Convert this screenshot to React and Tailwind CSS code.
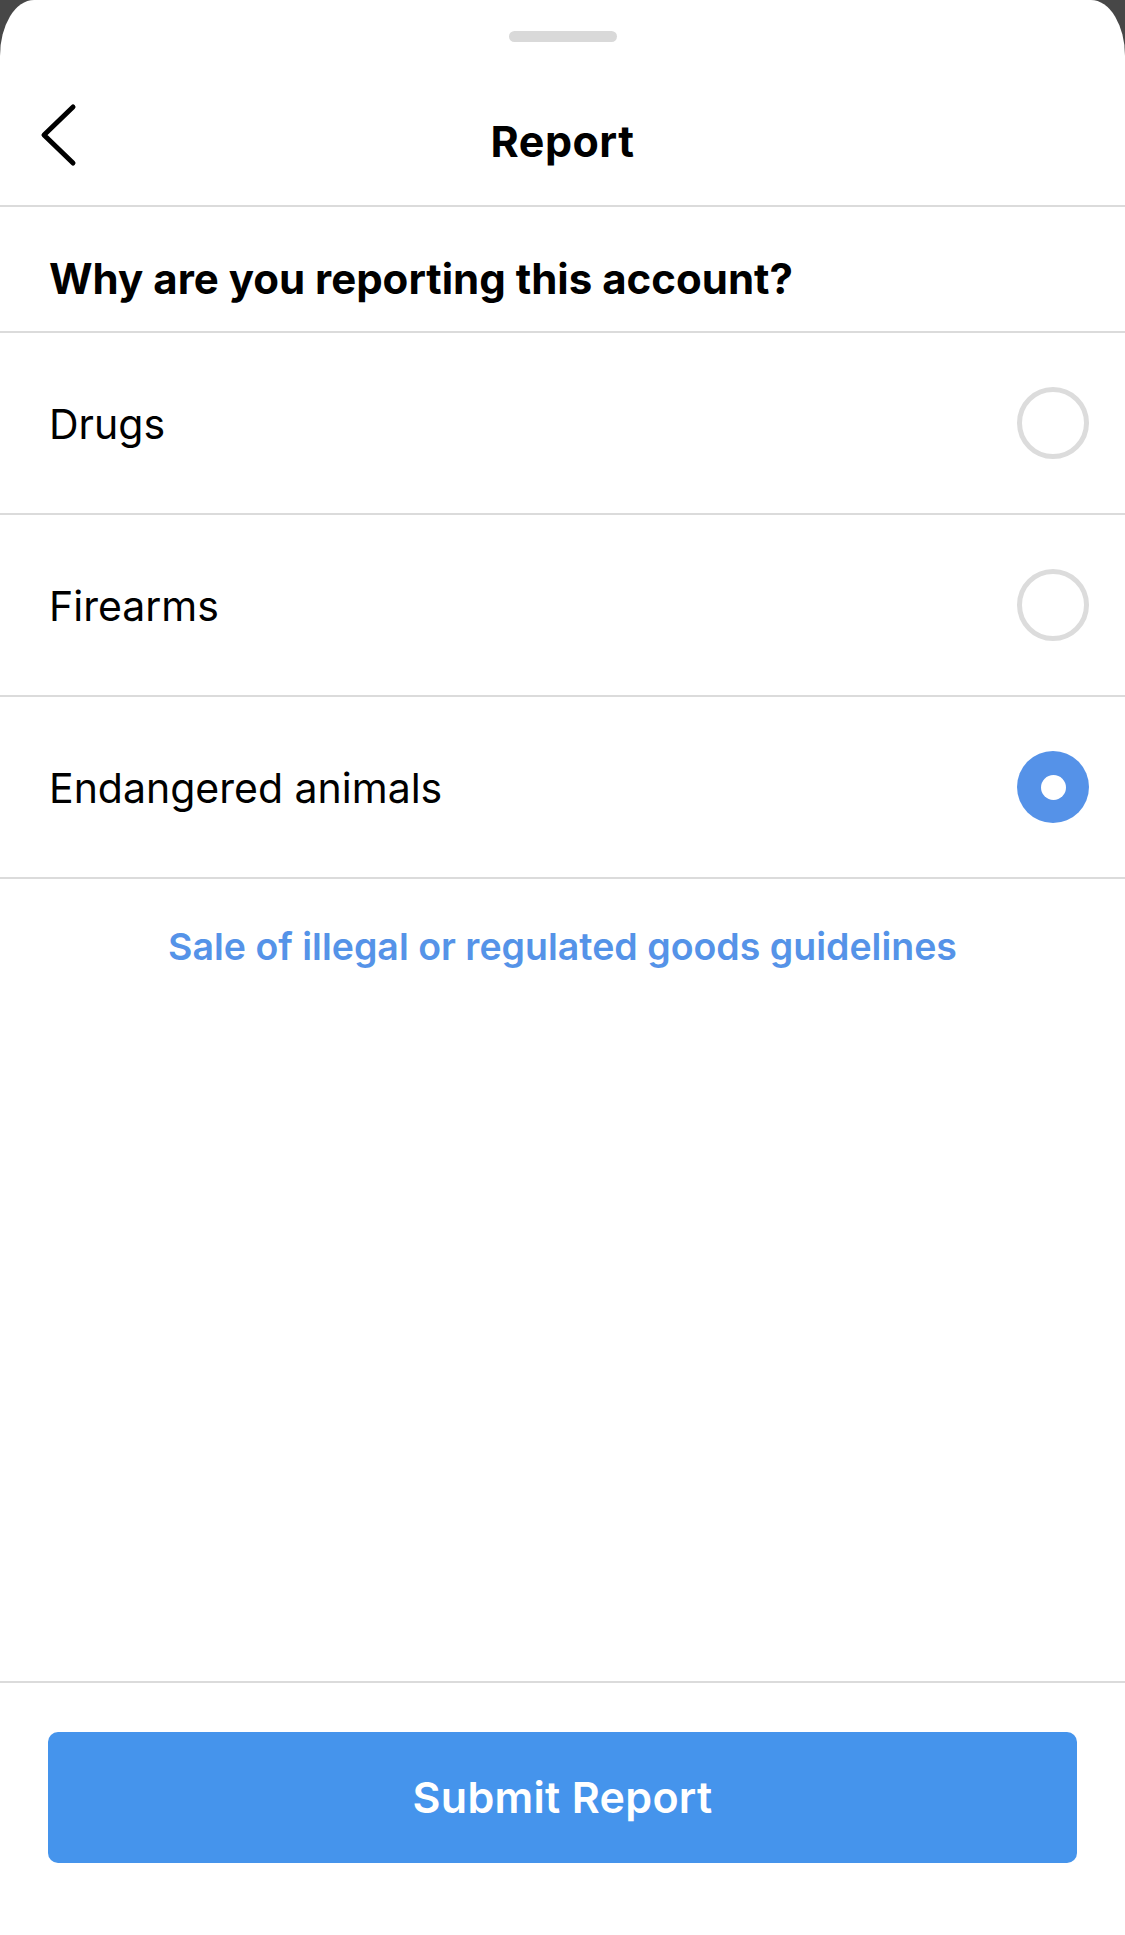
import React from "react";

function Radio({ selected }) {
  if (selected) {
    return (
      <div className="w-[72px] h-[72px] rounded-full bg-[#5592e8] flex items-center justify-center shrink-0">
        <div className="w-[25px] h-[25px] rounded-full bg-white" />
      </div>
    );
  }
  return <div className="w-[72px] h-[72px] rounded-full border-[5px] border-[#dcdcdc] shrink-0" />;
}

function Row({ label, selected }) {
  return (
    <div className="h-[182px] border-b-2 border-[#dbdbdb] flex items-center justify-between pl-[49px] pr-[36px]">
      <span className="text-[41px] text-black font-normal pt-[4px]">{label}</span>
      <Radio selected={selected} />
    </div>
  );
}

export default function App() {
  return (
    <div
      className="w-[1125px] h-[1935px] bg-[#474747] overflow-hidden"
      style={{ fontFamily: "Inter, 'Noto Sans', 'Liberation Sans', sans-serif" }}
    >
      <div className="w-full h-full bg-white rounded-tl-[34px_56px] rounded-tr-[34px_56px] flex flex-col">
        <div className="pt-[31px] flex justify-center">
          <div className="w-[108px] h-[11px] rounded-full bg-[#d9d9d9]" />
        </div>
        <div className="mt-[49px] h-[100px] grid grid-cols-[1fr_auto_1fr] items-center">
          <div className="pl-[40px] flex items-center -translate-y-[6px]">
            <svg width="40" height="64" viewBox="0 0 40 64" fill="none">
              <path d="M33 4 L4 32 L33 60" stroke="#000" strokeWidth="5" strokeLinecap="round" strokeLinejoin="round" />
            </svg>
          </div>
          <span className="text-[43px] font-bold text-black leading-none tracking-[0.5px]">Report</span>
          <div />
        </div>
        <div className="h-[16px] border-b-2 border-[#dbdbdb]" />
        <div className="h-[126px] border-b-2 border-[#dbdbdb] flex items-center pl-[49px] pt-[20px]">
          <span className="text-[42px] font-bold text-black leading-none">Why are you reporting this account?</span>
        </div>
        <Row label="Drugs" />
        <Row label="Firearms" />
        <Row label="Endangered animals" selected />
        <div className="h-[132px] flex items-center justify-center pt-[5px]">
          <span className="text-[37.5px] font-semibold text-[#5593e8]">Sale of illegal or regulated goods guidelines</span>
        </div>
        <div className="flex-1" />
        <div className="border-t-2 border-[#dbdbdb] pt-[49px] pb-[72px] px-[48px]">
          <button className="w-full h-[131px] rounded-[10px] bg-[#4594ec] flex items-center justify-center">
            <span className="text-[43px] font-semibold text-white tracking-[0.3px]">Submit Report</span>
          </button>
        </div>
      </div>
    </div>
  );
}
